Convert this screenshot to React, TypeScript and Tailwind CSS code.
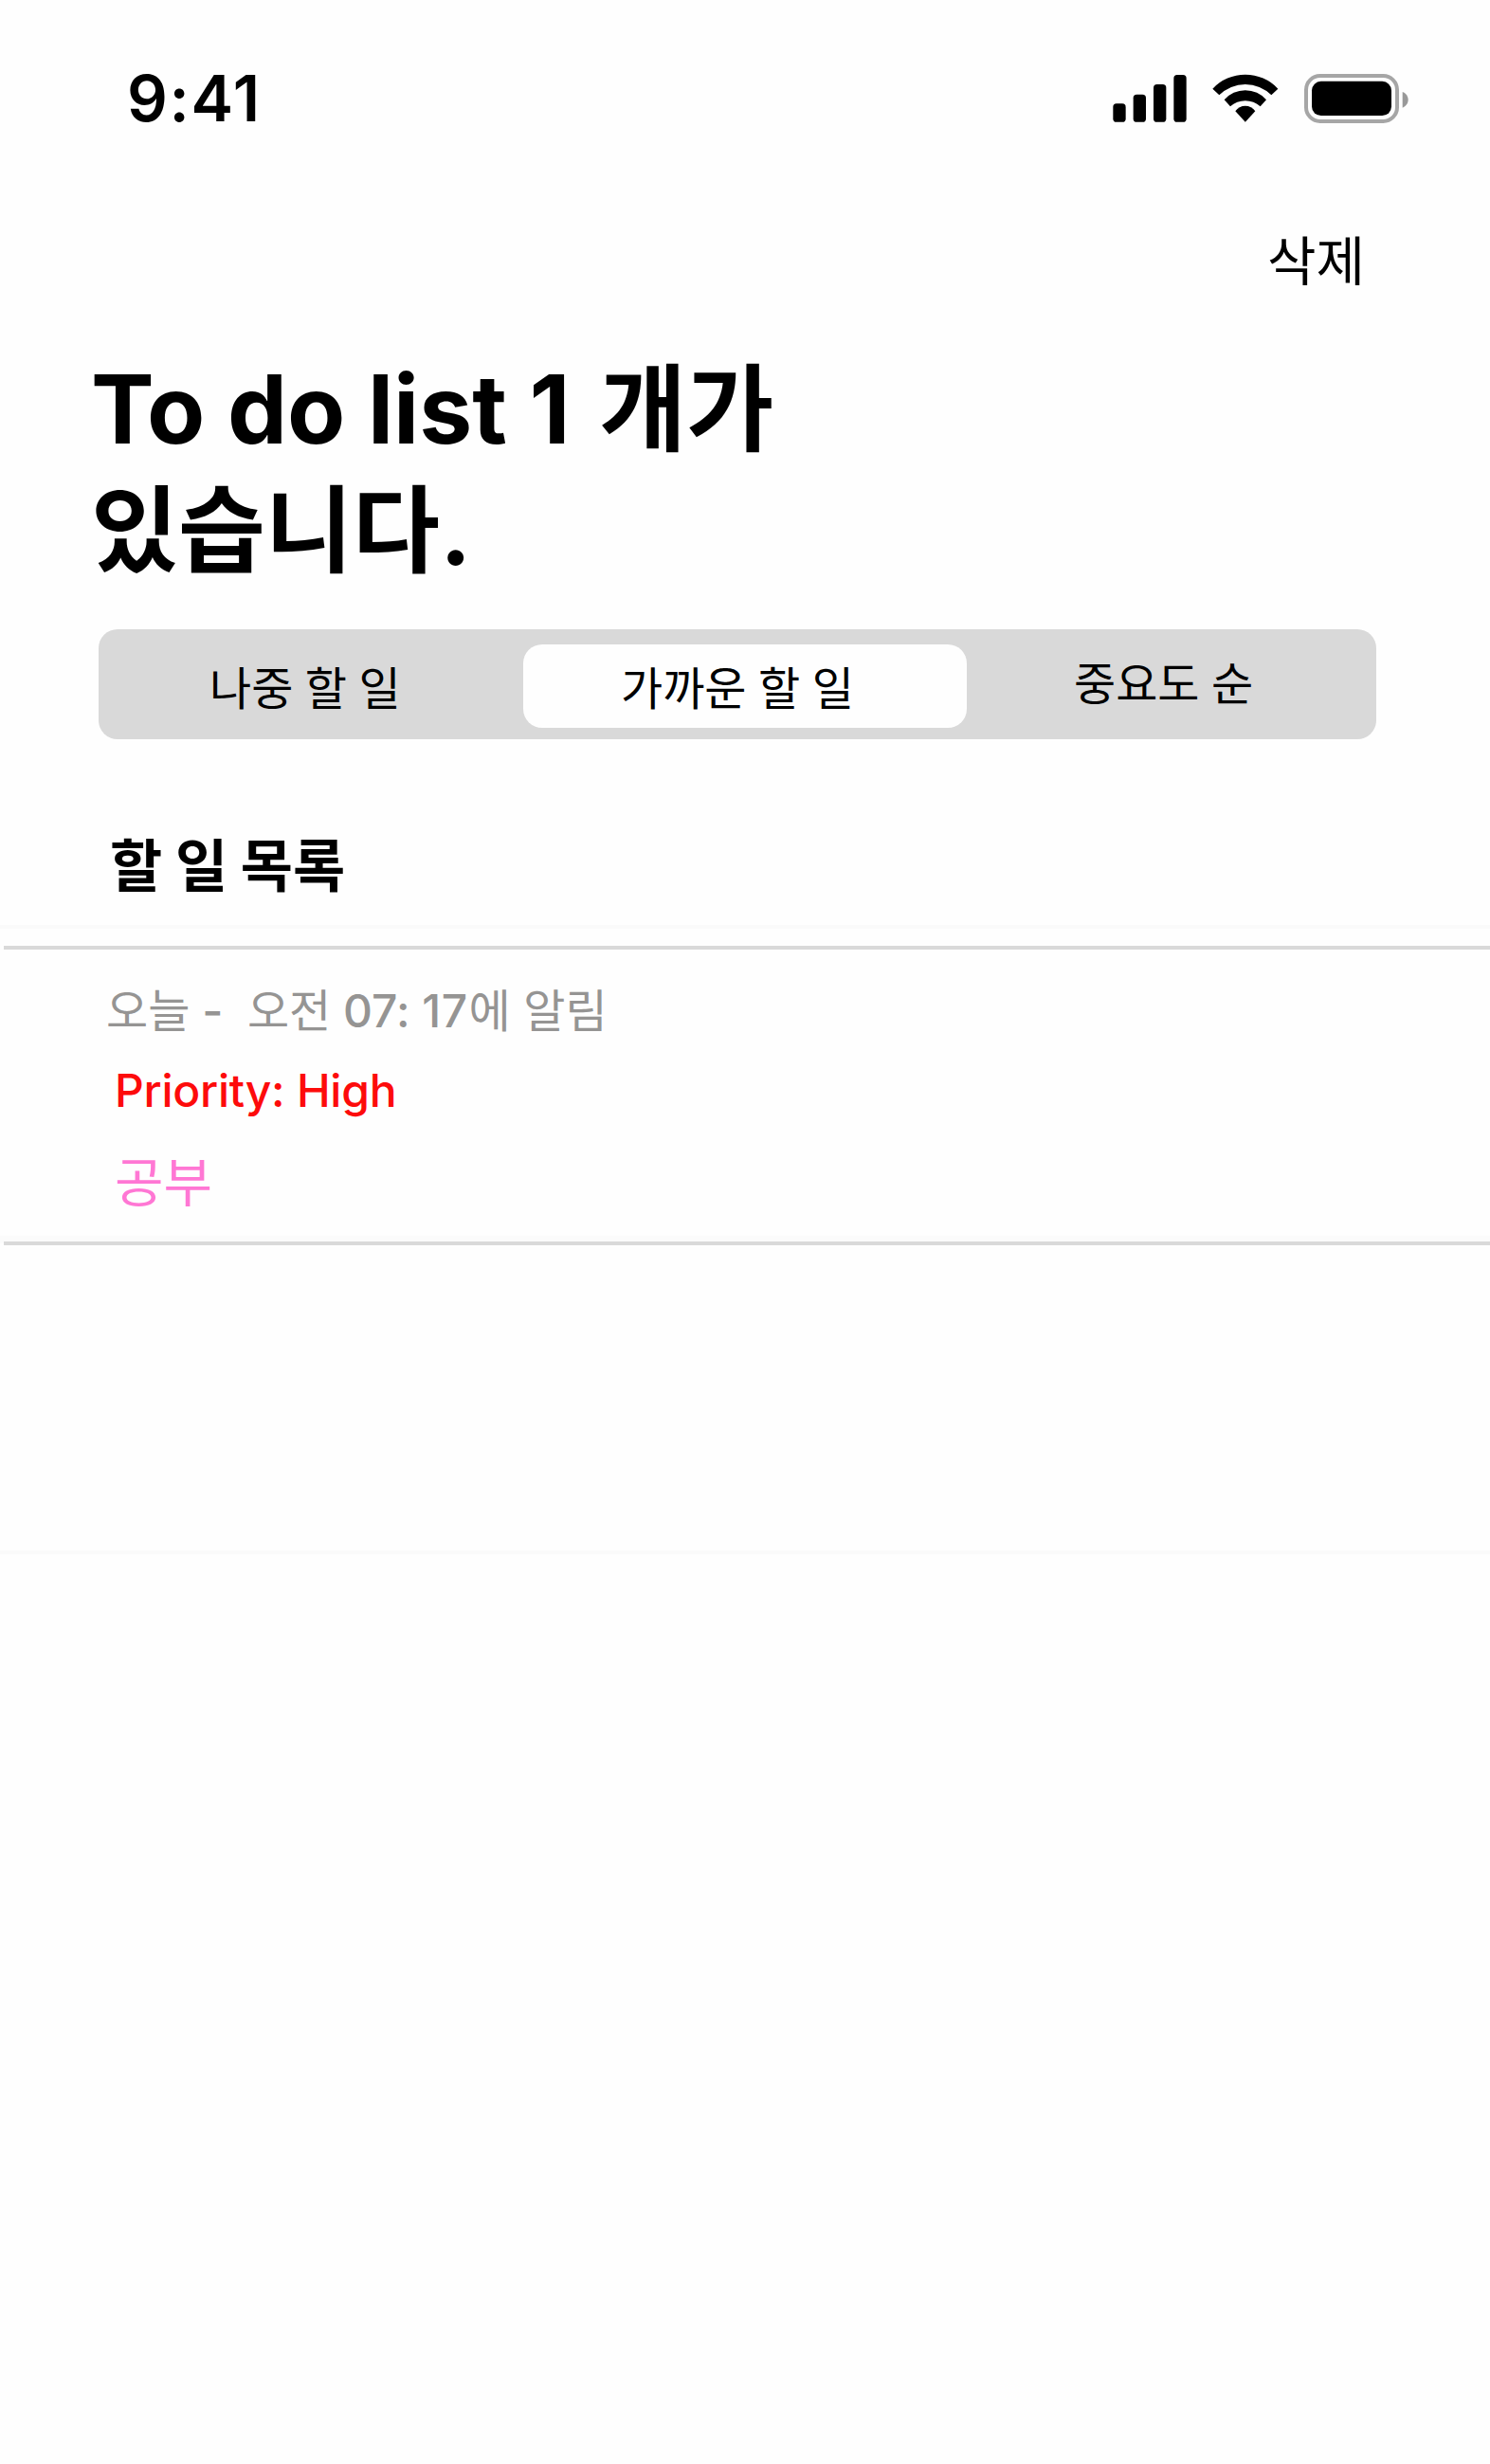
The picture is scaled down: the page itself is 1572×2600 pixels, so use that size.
function StatusIcons() {
  return (
    <svg className="h-[52px] w-[312px]" viewBox="72 84 936 156" fill="black">
      <rect x="73" y="178" width="40" height="58.500" rx="11" />
      <rect x="137" y="149" width="40" height="87.500" rx="11" />
      <rect x="201" y="117" width="40" height="119.500" rx="11" />
      <rect x="265" y="87" width="40" height="149.500" rx="11" />
      <path d="M388 131A141.500 141.500 0 0 1 595 131L574 151A117 117 0 0 0 409 151Z" />
      <path d="M425 166A87.600 87.600 0 0 1 558 166L539 187A70 70 0 0 0 444 187Z" />
      <path d="M460 202A38 38 0 0 1 523 202L491.500 236Z" />
      <rect x="684" y="90" width="288" height="144" rx="44" fill="none" stroke="#a6a6a6" strokeWidth="12" />
      <rect x="702" y="107.500" width="252" height="108.500" rx="29" />
      <path d="M989 141C1000 145 1007 155 1007 166C1007 177 1000 187 989 191Z" fill="#999999" />
    </svg>
  );
}

export default function App() {
  return (
    <div className="h-[2600px] w-[1572px] overflow-hidden bg-[#fefefe] font-[Inter,'Noto_Sans_CJK_KR',sans-serif] text-black">
      <header className="flex h-[208px] items-center justify-between pl-[134px] pr-[86px]">
        <p className="text-[67px] font-semibold leading-[66px] tracking-[1.7px]">9:41</p>
        <StatusIcons />
      </header>
      <div className="flex h-[136px] justify-end pr-[132px]">
        <button className="text-[56px] leading-[136px]">삭제</button>
      </div>
      <h1 className="ml-[96px] mt-6 text-[100px] font-bold leading-[128px]">
        To do list 1 <span className="ml-[7px]">개가</span>
        <br />
        있습니다.
      </h1>
      <div className="ml-[104px] mt-10 flex h-[116px] w-[1348px] rounded-[20px] bg-[#d9d9d9] pt-4 text-[48px]">
        <button className="h-[88px] w-[448px] whitespace-nowrap pl-[117px] text-left leading-[93px] [word-spacing:-1px]">나중 할 일</button>
        <button className="h-[88px] w-[468px] whitespace-nowrap rounded-[20px] bg-[#fefefe] pl-[103px] text-left leading-[93px] [word-spacing:-1px]">가까운 할 일</button>
        <button className="h-[83px] whitespace-nowrap pl-[113px] text-left leading-[83px] [word-spacing:-1px]">중요도 순</button>
      </div>
      <h2 className="ml-[116px] mt-[104px] text-[60px] font-bold leading-[60px] [word-spacing:-0.5px]">할 일 목록</h2>
      <div className="mt-8 h-1 bg-[#fafafa]" />
      <section className="mt-[18px]">
        <div className="ml-1 h-1 bg-[#d9d9d9]" />
        <p className="ml-[112px] mt-[41px] whitespace-pre text-[48px] leading-[48px] text-[#959493]">
          오늘<span className="font-medium"> -  </span>오전<span className="font-medium"> 07: </span>
          <span className="mr-px font-medium tracking-[0.5px]">17</span>에 알림
        </p>
        <p className="ml-[121px] mt-9 text-[48px] font-medium leading-[48px] tracking-[-0.27px] text-[#fd0b0b]">Priority: High</p>
        <p className="ml-[121px] mt-[45px] text-[56px] leading-[56px] text-[#ff77d4]">공부</p>
        <div className="mt-7 h-2 bg-[#fbfbfb]" />
        <div className="-mt-0.5 ml-1 h-1 bg-[#d9d9d9]" />
      </section>
      <div className="mt-[322px] h-1 bg-[#fafafa]" />
    </div>
  );
}
